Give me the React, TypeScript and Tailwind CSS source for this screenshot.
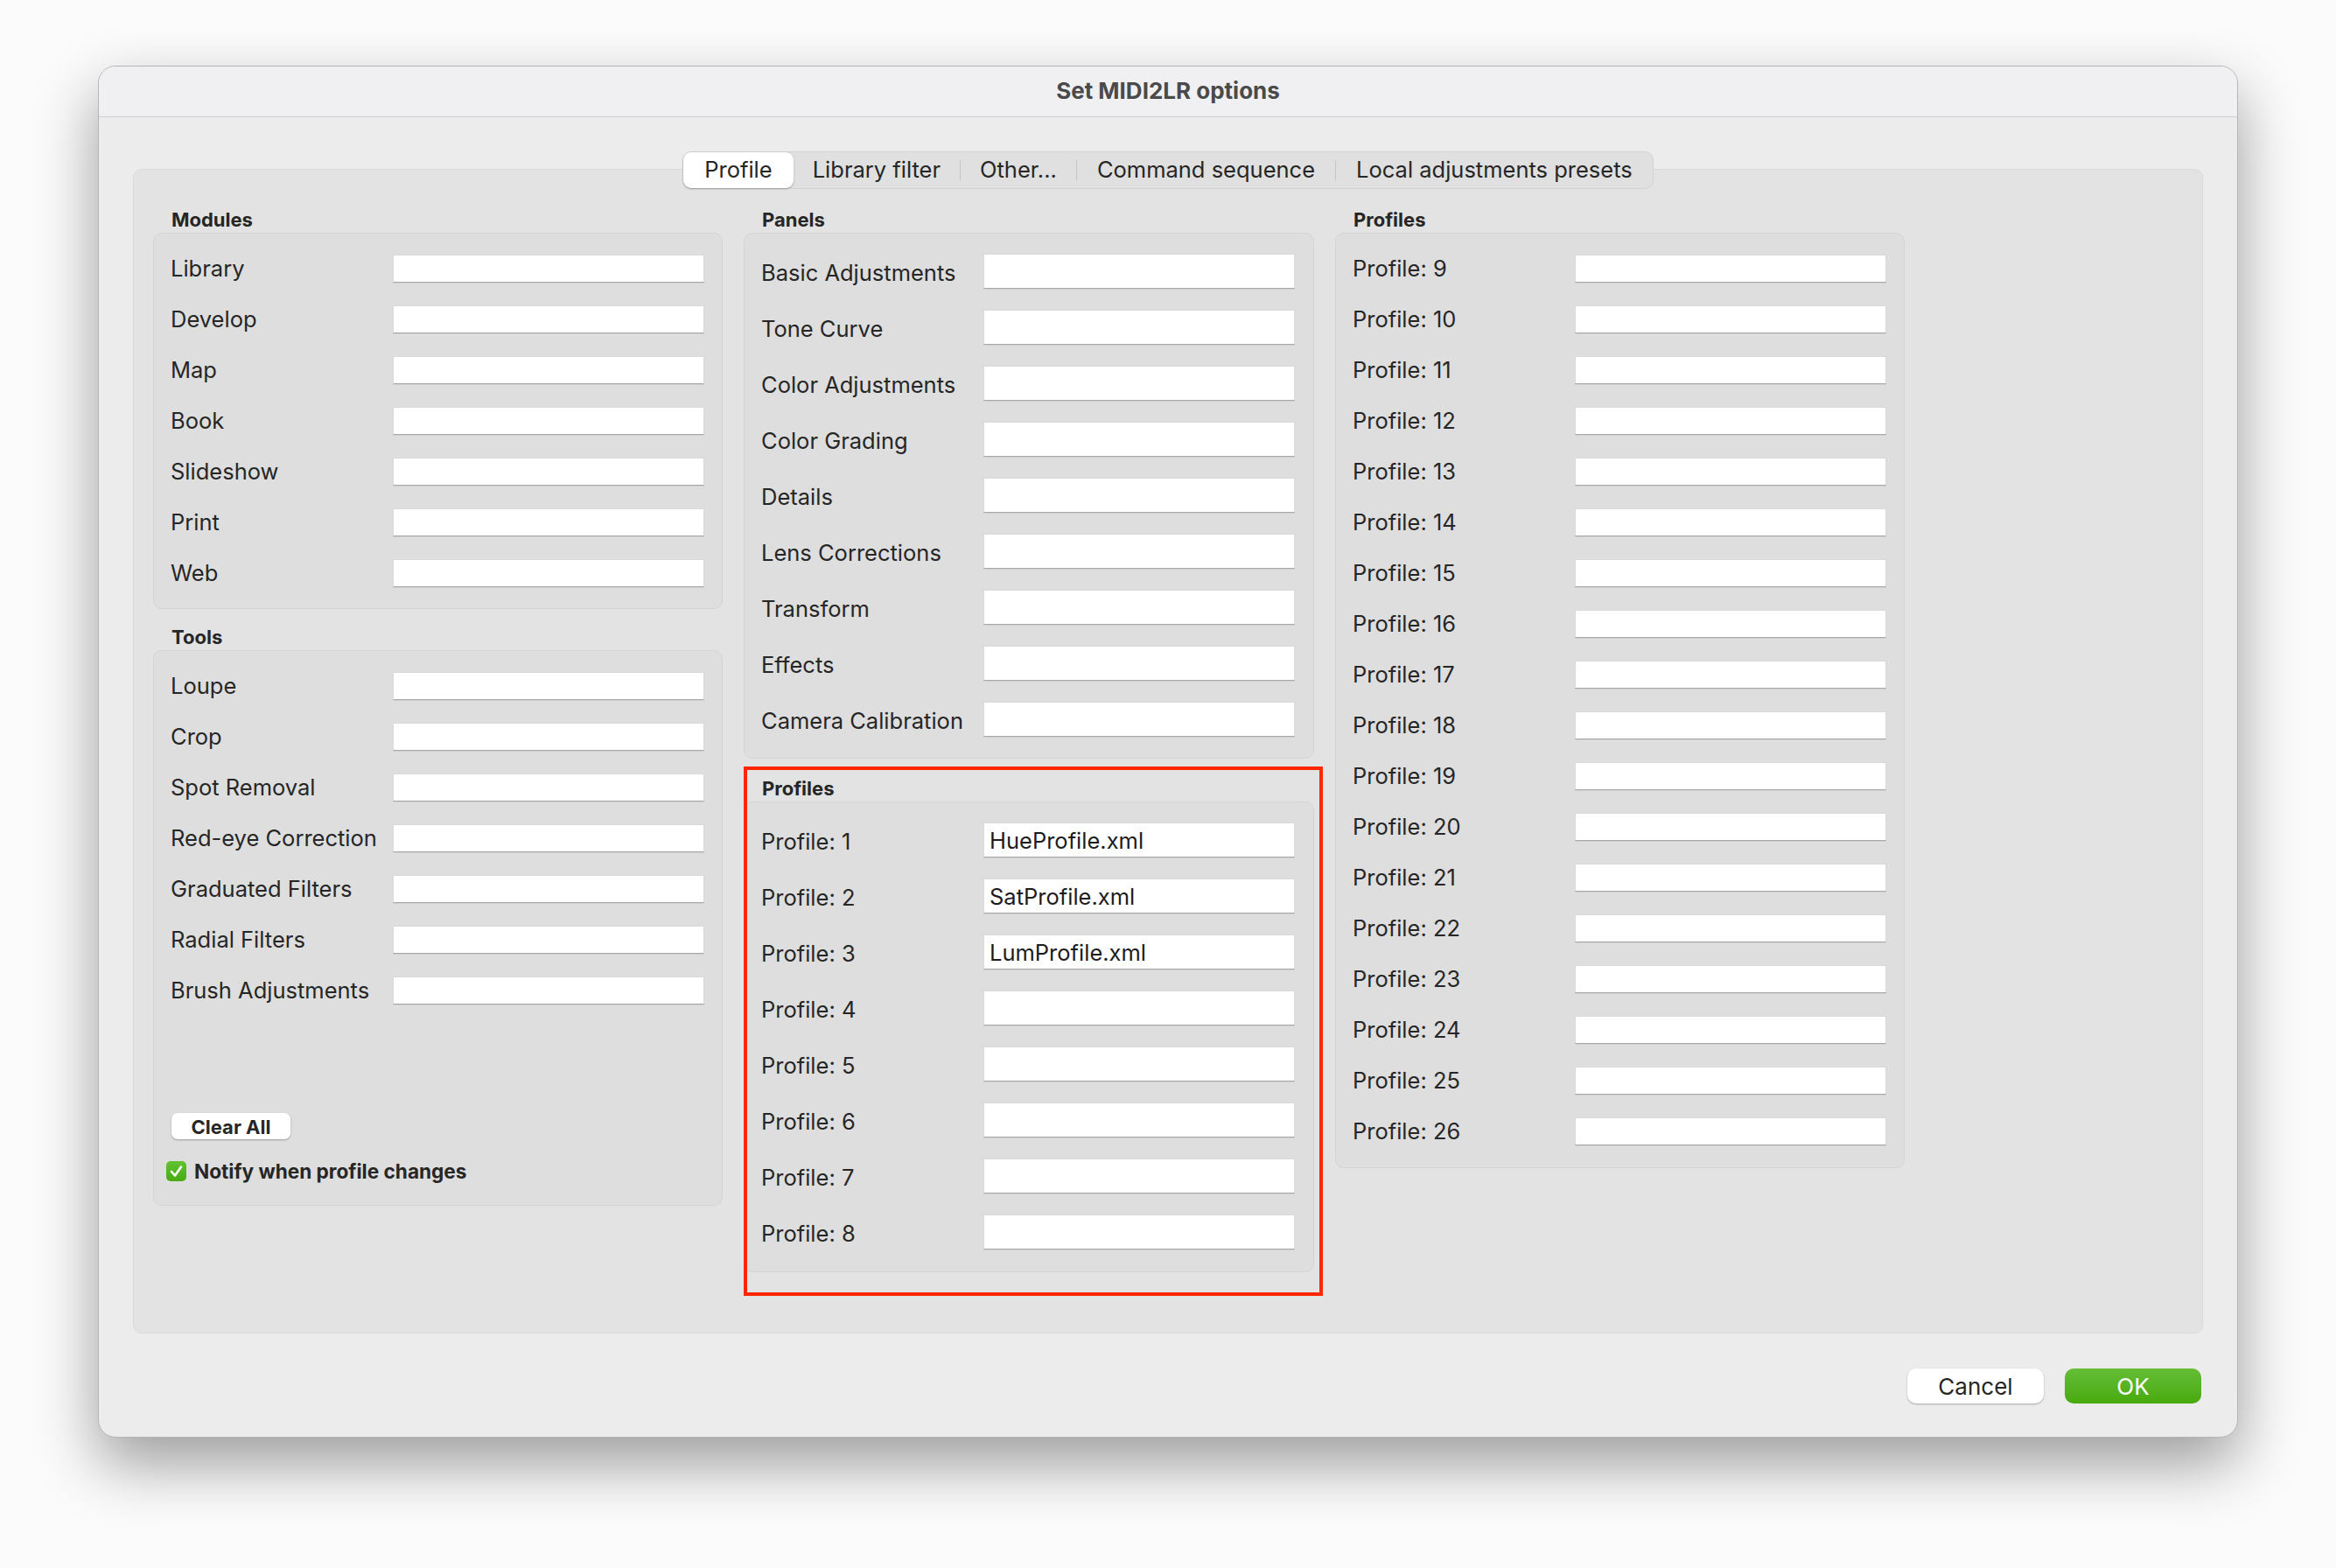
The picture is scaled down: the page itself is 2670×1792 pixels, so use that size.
import React from "react";

const modules = ["Library", "Develop", "Map", "Book", "Slideshow", "Print", "Web"];
const tools = [
    "Loupe",
    "Crop",
    "Spot Removal",
    "Red-eye Correction",
    "Graduated Filters",
    "Radial Filters",
    "Brush Adjustments",
];
const panels = [
    "Basic Adjustments",
    "Tone Curve",
    "Color Adjustments",
    "Color Grading",
    "Details",
    "Lens Corrections",
    "Transform",
    "Effects",
    "Camera Calibration",
];
const firstProfiles = [
    { n: 1, value: "HueProfile.xml" },
    { n: 2, value: "SatProfile.xml" },
    { n: 3, value: "LumProfile.xml" },
    { n: 4, value: "" },
    { n: 5, value: "" },
    { n: 6, value: "" },
    { n: 7, value: "" },
    { n: 8, value: "" },
];
const moreProfiles = Array.from({ length: 18 }, (_, i) => i + 9);

function Row({ label, value = "", tall = false }: { label: string; value?: string; tall?: boolean }) {
    return (
        <div className="flex items-center pl-[19px]">
            <span
                className={`w-[254px] shrink-0 text-[25.5px] leading-[32px] text-[#262626] whitespace-nowrap ${tall ? "pt-[3px]" : ""}`}
            >
                {label}
            </span>
            <div
                className={`w-[356px] ${tall ? "h-[40px] pt-[2px]" : "h-[32px]"} flex items-center bg-white border border-[#d9d9d9] border-b-[#a8a8a8] pl-[6px] text-[25.5px] text-[#1c1c1c] shadow-[0_1px_0_rgba(0,0,0,0.06)]`}
            >
                {value}
            </div>
        </div>
    );
}

function Header({ children }: { children: React.ReactNode }) {
    return <div className="pl-[21px] mb-[2px] text-[22px] leading-[26px] font-bold text-[#262626]">{children}</div>;
}

function Box({ children, className = "" }: { children: React.ReactNode; className?: string }) {
    return (
        <div className={`flex flex-col bg-[#dedede] border border-[#d4d4d4] rounded-[10px] ${className}`}>{children}</div>
    );
}

function Tabs() {
    const Sep = () => <div className="w-px h-[23px] bg-[#c6c6c6]" />;
    return (
        <div className="relative z-10 flex justify-center">
            <div className="flex items-center h-[43px] bg-[#e0e0e0] border border-[#d2d2d2] rounded-[10px] text-[25.5px] text-[#262626]">
                <div className="h-[41px] flex items-center px-[24px] bg-white rounded-[9px] shadow-[0_1px_2px_rgba(0,0,0,0.3)]">
                    Profile
                </div>
                <div className="px-[22px]">Library filter</div>
                <Sep />
                <div className="px-[22px]">Other...</div>
                <Sep />
                <div className="px-[23px]">Command sequence</div>
                <Sep />
                <div className="px-[23px]">Local adjustments presets</div>
            </div>
        </div>
    );
}

export default function App() {
    return (
        <div className="w-[2670px] h-[1792px] bg-[#fbfbfb] pl-[112px] pt-[75px] font-['Inter',sans-serif]">
            <div className="w-[2446px] h-[1568px] rounded-[20px] overflow-hidden bg-[#ececec] border border-[#b5b5b5] shadow-[0_30px_70px_rgba(0,0,0,0.38)]">
                {/* title bar */}
                <div className="h-[58px] pb-[2px] flex items-center justify-center bg-[#f0f0f2] border-b border-[#cfcfcf] text-[26px] font-bold text-[#4a4a4a]">
                    Set MIDI2LR options
                </div>

                <div className="px-[39px] pt-[39px]">
                    <Tabs />

                    <div className="-mt-[23px] h-[1331px] bg-[#e3e3e3] border border-[#d9d9d9] rounded-[10px] pt-[44px] px-[22px]">
                        <div className="flex gap-[24px] items-start">
                            {/* left column */}
                            <div className="w-[651px] flex flex-col">
                                <Header>Modules</Header>
                                <Box className="pt-[24px] pb-[24px] gap-[26px]">
                                    {modules.map((m) => (
                                        <Row key={m} label={m} />
                                    ))}
                                </Box>
                                <div className="mt-[19px]">
                                    <Header>Tools</Header>
                                </div>
                                <Box className="pt-[24px] pb-[21px]">
                                    <div className="flex flex-col gap-[26px]">
                                        {tools.map((t) => (
                                            <Row key={t} label={t} />
                                        ))}
                                    </div>
                                    <div className="mt-[124px] pl-[20px]">
                                        <button className="w-[136px] h-[30px] bg-white rounded-[7px] text-[22px] font-bold text-[#262626] shadow-[0_1px_2px_rgba(0,0,0,0.3)]">
                                            Clear All
                                        </button>
                                    </div>
                                    <div className="mt-[20px] pl-[14px] flex items-center gap-[9px]">
                                        <div className="w-[23px] h-[23px] rounded-[5px] bg-gradient-to-b from-[#62c233] to-[#47ab0f] flex items-center justify-center">
                                            <svg width="15" height="15" viewBox="0 0 15 15">
                                                <polyline
                                                    points="2,8 6,12.5 13,2.5"
                                                    fill="none"
                                                    stroke="white"
                                                    strokeWidth="2.6"
                                                    strokeLinecap="round"
                                                    strokeLinejoin="round"
                                                />
                                            </svg>
                                        </div>
                                        <span className="text-[22.6px] font-bold text-[#262626]">Notify when profile changes</span>
                                    </div>
                                </Box>
                            </div>

                            {/* middle column */}
                            <div className="w-[652px] flex flex-col">
                                <Header>Panels</Header>
                                <Box className="pt-[23px] pb-[24px] gap-[24px]">
                                    {panels.map((p) => (
                                        <Row key={p} label={p} tall />
                                    ))}
                                </Box>
                                <div className="relative mt-[21px]">
                                    <Header>Profiles</Header>
                                    <Box className="pt-[23px] pb-[25px] gap-[24px]">
                                        {firstProfiles.map((p) => (
                                            <Row key={p.n} label={`Profile: ${p.n}`} value={p.value} tall />
                                        ))}
                                    </Box>
                                    <div className="absolute -top-[12px] left-0 -right-[10px] -bottom-[27px] border-[4px] border-[#ff2600] pointer-events-none" />
                                </div>
                            </div>

                            {/* right column */}
                            <div className="w-[651px] flex flex-col">
                                <Header>Profiles</Header>
                                <Box className="pt-[24px] pb-[25px] gap-[26px]">
                                    {moreProfiles.map((n) => (
                                        <Row key={n} label={`Profile: ${n}`} />
                                    ))}
                                </Box>
                            </div>
                        </div>
                    </div>

                    <div className="mt-[40px] flex justify-end gap-[24px] pr-[2px]">
                        <button className="w-[156px] h-[40px] bg-white rounded-[10px] text-[26px] text-[#262626] shadow-[0_1px_2px_rgba(0,0,0,0.3)]">
                            Cancel
                        </button>
                        <button className="w-[156px] h-[40px] rounded-[10px] bg-gradient-to-b from-[#65be35] to-[#47aa08] text-[26px] text-white">
                            OK
                        </button>
                    </div>
                </div>
            </div>
        </div>
    );
}
